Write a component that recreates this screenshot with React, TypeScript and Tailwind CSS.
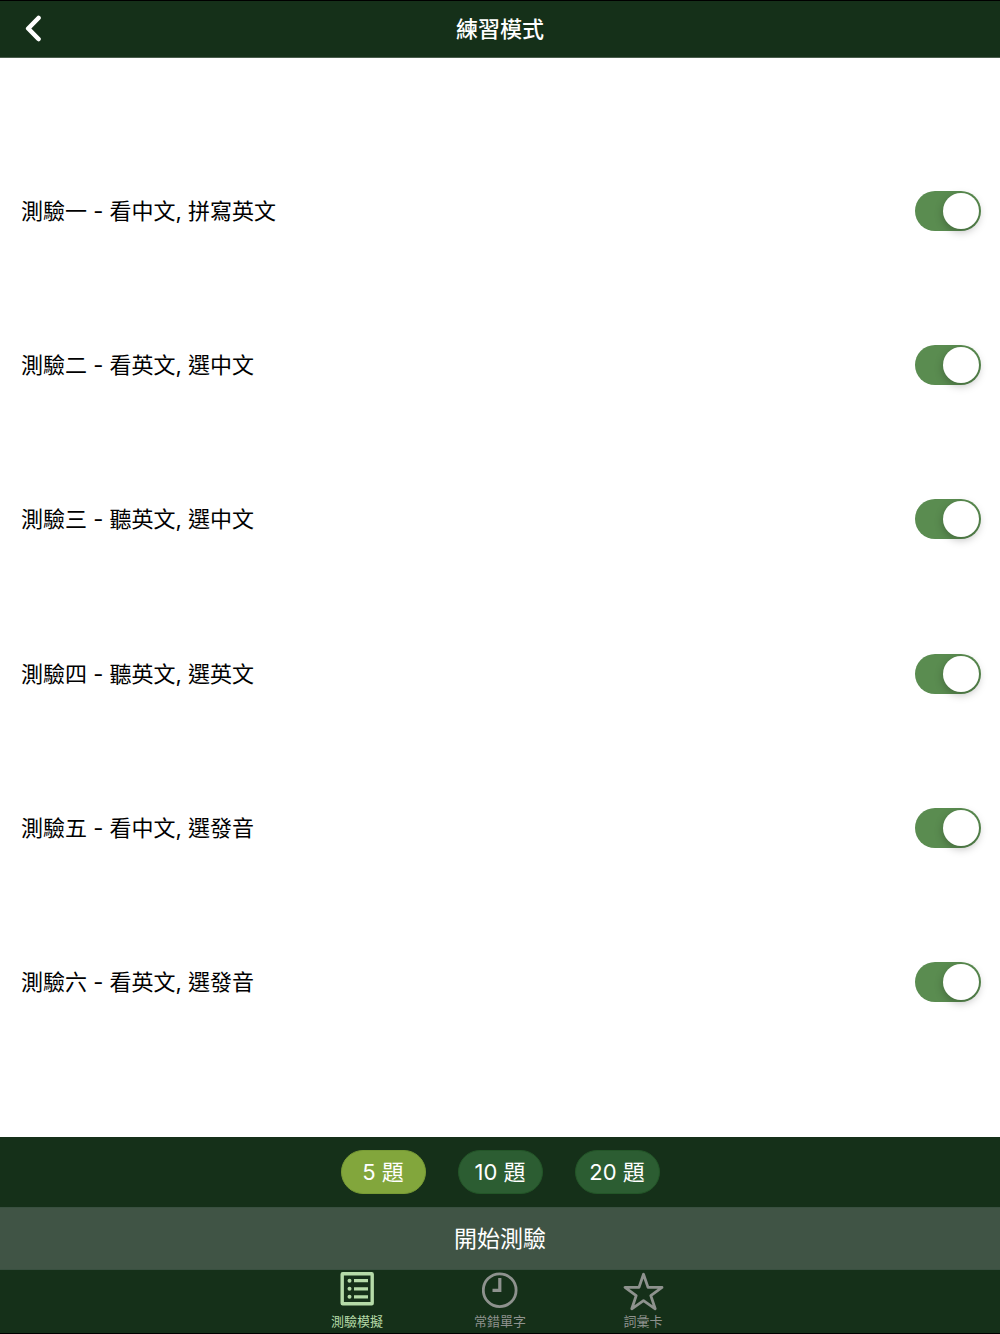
import { useState } from 'react'

const quizzes = [
  { id: 'quiz-1', label: '測驗一 - 看中文, 拼寫英文' },
  { id: 'quiz-2', label: '測驗二 - 看英文, 選中文' },
  { id: 'quiz-3', label: '測驗三 - 聽英文, 選中文' },
  { id: 'quiz-4', label: '測驗四 - 聽英文, 選英文' },
  { id: 'quiz-5', label: '測驗五 - 看中文, 選發音' },
  { id: 'quiz-6', label: '測驗六 - 看英文, 選發音' },
]

const counts = [5, 10, 20]

function ListIcon() {
  return (
    <svg width="34" height="38" viewBox="0 0 34 38" fill="none" aria-hidden="true">
      <rect x="2.200" y="3.800" width="30" height="30" rx="0.5" stroke="currentColor" strokeWidth="3.4" />
      <g stroke="currentColor" strokeWidth="3.2">
        <path d="M14 10.700h14M14 18.800h14M14 26.800h14" />
      </g>
      <g fill="currentColor">
        <circle cx="9.500" cy="10.700" r="2" />
        <circle cx="9.500" cy="18.800" r="2" />
        <circle cx="9.500" cy="26.800" r="2" />
      </g>
    </svg>
  )
}

function ClockIcon() {
  return (
    <svg width="36" height="40" viewBox="0 0 36 40" fill="none" stroke="currentColor" aria-hidden="true">
      <circle cx="17.700" cy="20.200" r="16.400" strokeWidth="2.8" />
      <path d="M17.800 8v12.300h-7.300" strokeWidth="3.200" />
    </svg>
  )
}

function StarIcon() {
  return (
    <svg width="42" height="42" viewBox="0 0 42 42" fill="none" aria-hidden="true">
      <path
        d="M21.500 4.300L26 17.400h14L28.800 25.600 33.200 38.800 21.500 30.700 9.800 38.800 14.200 25.600 3 17.400h14z"
        stroke="currentColor"
        strokeWidth="2.8"
        strokeLinejoin="round"
      />
    </svg>
  )
}

const tabs = [
  { label: '測驗模擬', icon: <ListIcon />, active: true },
  { label: '常錯單字', icon: <ClockIcon />, active: false },
  { label: '詞彙卡', icon: <StarIcon />, active: false },
]

export default function App() {
  const [enabled, setEnabled] = useState<Record<string, boolean>>(
    Object.fromEntries(quizzes.map((q) => [q.id, true]))
  )
  const [count, setCount] = useState(5)

  return (
    <div className="flex min-h-screen flex-col bg-white font-['Inter','Noto_Sans_CJK_TC',sans-serif] text-[22px] leading-8 text-black">
      <header className="grid h-[58px] grid-cols-[1fr_auto_1fr] items-center border-t border-b border-t-black border-b-[#4a5d4d] bg-[#153019] text-white">
        <button type="button" aria-label="返回" className="flex h-full w-16 items-center pl-6">
          <svg width="18" height="28" viewBox="0 0 18 28" fill="none" aria-hidden="true">
            <path d="M14.500 3L4.200 13.500 14.500 24" stroke="currentColor" strokeWidth="4.6" strokeLinecap="round" strokeLinejoin="round" />
          </svg>
        </button>
        <h1 className="font-medium">練習模式</h1>
      </header>

      <main className="flex flex-1 flex-col pt-[76px] pb-[78px]">
        {quizzes.map((quiz) => (
          <div key={quiz.id} className="flex flex-1 items-center justify-between pl-[21px] pr-[19px]">
            <label htmlFor={quiz.id}>{quiz.label}</label>
            <input
              id={quiz.id}
              type="checkbox"
              role="switch"
              checked={enabled[quiz.id]}
              onChange={(e) => setEnabled({ ...enabled, [quiz.id]: e.target.checked })}
              className="flex h-10 w-[66px] shrink-0 cursor-pointer appearance-none items-center rounded-full bg-gray-300 px-0.5 before:size-9 before:rounded-full before:bg-white before:shadow-[0_3px_8px_rgba(0,0,0,0.25)] checked:justify-end checked:bg-[#5a8c50]"
            />
          </div>
        ))}
      </main>

      <div className="flex h-[70px] items-center justify-center gap-8 bg-[#153019] text-white">
        {counts.map((n) => (
          <button
            key={n}
            type="button"
            aria-pressed={count === n}
            onClick={() => setCount(n)}
            className={`h-11 w-[85px] rounded-full border ${
              count === n ? 'border-[#789b35] bg-[#82a63c]' : 'border-[#235528] bg-[#2c5d32]'
            }`}
          >
            {n} 題
          </button>
        ))}
      </div>

      <button type="button" className="h-[63px] border-y border-[#395040] bg-[#405445] text-[23px] text-white">
        開始測驗
      </button>

      <nav className="flex h-16 justify-center border-b border-black bg-[#153019] text-[13px] leading-5">
        {tabs.map((tab) => (
          <a
            key={tab.label}
            href="#"
            aria-current={tab.active ? 'page' : undefined}
            className={`flex w-[143px] flex-col items-center ${tab.active ? 'text-[#b5dba8]' : 'text-[#8e928e]'}`}
          >
            <span className="flex h-[41px] items-start">{tab.icon}</span>
            {tab.label}
          </a>
        ))}
      </nav>
    </div>
  )
}
